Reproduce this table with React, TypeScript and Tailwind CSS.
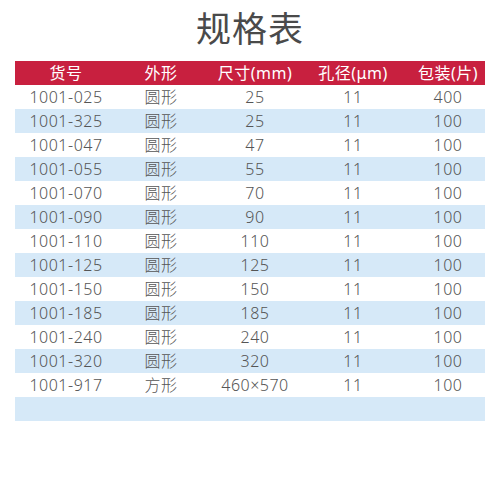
import React from "react";

const rows = [
    ["1001-025", "圆形", "25", "11", "400"],
    ["1001-325", "圆形", "25", "11", "100"],
    ["1001-047", "圆形", "47", "11", "100"],
    ["1001-055", "圆形", "55", "11", "100"],
    ["1001-070", "圆形", "70", "11", "100"],
    ["1001-090", "圆形", "90", "11", "100"],
    ["1001-110", "圆形", "110", "11", "100"],
    ["1001-125", "圆形", "125", "11", "100"],
    ["1001-150", "圆形", "150", "11", "100"],
    ["1001-185", "圆形", "185", "11", "100"],
    ["1001-240", "圆形", "240", "11", "100"],
    ["1001-320", "圆形", "320", "11", "100"],
    ["1001-917", "方形", "460×570", "11", "100"],
    ["", "", "", "", ""],
];

const headers = ["货号", "外形", "尺寸(mm)", "孔径(μm)", "包装(片)"];

const font = { fontFamily: '"Noto Sans", "Noto Sans CJK SC", sans-serif' };

const Row = ({ cells, className }: { cells: string[]; className: string }) => (
    <div className={`grid grid-cols-[102px_88px_100px_96px_84px] h-[24px] items-center text-[16px] leading-none ${className}`}>
        {cells.map((c, i) => (
            <div key={i} className={`text-center whitespace-nowrap ${i === 4 ? "pl-[10px]" : ""}`}>
                {c}
            </div>
        ))}
    </div>
);

const App = () => {
    return (
        <div className="w-[500px] h-[500px] bg-white" style={font}>
            <h1 className="h-[61px] pt-[5px] text-center text-[35px] leading-[48px] text-[#4a4a4a] font-normal tracking-[1px]">
                规格表
            </h1>
            <div className="mx-[15px]">
                <Row cells={headers} className="bg-[#c8203f] text-white tracking-[0.5px]" />
                {rows.map((r, idx) => (
                    <Row
                        key={idx}
                        cells={r}
                        className={`text-[#555555] font-light tracking-[0.5px] ${idx % 2 === 1 ? "bg-[#d6e9f8]" : "bg-white"}`}
                    />
                ))}
            </div>
        </div>
    );
};

export default App;
